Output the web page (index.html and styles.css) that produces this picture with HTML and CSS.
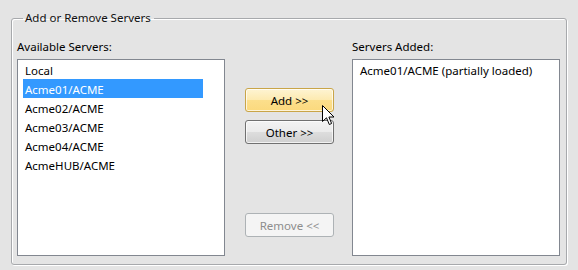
FILE: index.html
```html
<!DOCTYPE html>
<html lang="en">
<head>
    <meta charset="UTF-8">
    <meta name="viewport" content="width=device-width, initial-scale=1.0">
    <title>Add or Remove Servers</title>
    <link rel="stylesheet" href="styles.css">
</head>
<body>
    <fieldset class="group">
        <legend>Add or Remove Servers</legend>
        <div class="panel">
            <div class="column">
                <div class="label">Available Servers:</div>
                <ul class="listbox">
                    <li>Local</li>
                    <li class="selected">Acme01/ACME</li>
                    <li>Acme02/ACME</li>
                    <li>Acme03/ACME</li>
                    <li>Acme04/ACME</li>
                    <li>AcmeHUB/ACME</li>
                </ul>
            </div>
            <div class="actions">
                <div class="btn-wrap">
                    <button class="btn hover">Add &gt;&gt;</button>
                    <svg class="cursor" width="14" height="21" viewBox="0 0 14 21">
                        <path d="M0.5 0.5 L0.5 16.5 L4.5 12.8 L7.3 19.5 L9.6 18.5 L6.9 12 L12 12 Z" fill="#fff" stroke="#000" stroke-width="1" stroke-linejoin="miter"/>
                    </svg>
                </div>
                <button class="btn">Other &gt;&gt;</button>
                <button class="btn remove" disabled>Remove &lt;&lt;</button>
            </div>
            <div class="column">
                <div class="label">Servers Added:</div>
                <ul class="listbox">
                    <li>Acme01/ACME (partially loaded)</li>
                </ul>
            </div>
        </div>
    </fieldset>
</body>
</html>
```

FILE: styles.css
```css
* { margin: 0; padding: 0; box-sizing: border-box; }
body { background: #e4e4e4; padding: 10px 11px 5px 11px; font-family: "Noto Sans", sans-serif; font-size: 11.5px; color: #000; height: 270px; overflow: hidden; }

/* Group box */
.group { border: 1px solid #a7a9ac; border-radius: 3px; box-shadow: inset 1px 1px 0 #fff, 1px 1px 0 #fff; height: 255px; padding: 12px 6px 0 5px; }
.group legend { margin-left: 6px; padding: 0 3px 0 2px; line-height: 16px; font-size: 11.5px; color: #111; }

.panel { display: grid; grid-template-columns: 208px 127px 208px; }
.column { display: flex; flex-direction: column; }
.label { line-height: 16px; padding-top: 1px; margin-bottom: 4px; }

/* List boxes */
.listbox { list-style: none; background: #fff; border: 1px solid #828790; height: 197px; padding: 0 5px; }
.listbox li { width: 180px; height: 19px; line-height: 19px; padding: 1px 2px 0; white-space: nowrap; }
.listbox li.selected { background: #3399ff; color: #fff; }

/* Buttons */
.actions { display: flex; flex-direction: column; align-items: center; padding-top: 50px; padding-left: 2px; }
.btn-wrap { position: relative; }
.btn { width: 89px; height: 24px; border: 1px solid #707070; border-radius: 3px; font-family: inherit; font-size: 11.5px; color: #000; background: linear-gradient(#f3f3f3 0%, #ebebeb 50%, #dddddd 51%, #cfcfcf 100%); box-shadow: inset 0 0 0 1px rgba(255,255,255,0.7); margin-bottom: 8px; }
.btn.hover { border-color: #c9a548; background: linear-gradient(#fef4d3 0%, #fdeab0 50%, #fcdf8c 51%, #fbd97d 100%); }
.btn.remove { margin-top: 61px; background: #f4f4f4; border-color: #adb2b5; color: #8d8d8d; box-shadow: none; }
.cursor { position: absolute; left: 77px; top: 17px; }
```
